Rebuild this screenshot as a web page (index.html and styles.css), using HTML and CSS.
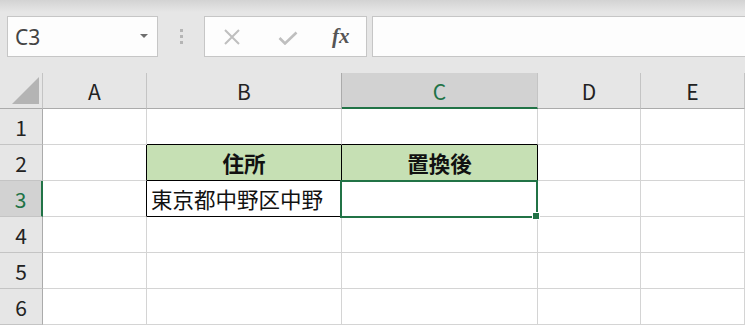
FILE: index.html
```html
<!DOCTYPE html>
<html>
<head>
  <title>Sheet</title>
  <link rel="stylesheet" href="styles.css">
</head>
<body>
  <div class="ribbon">
    <div class="namebox">
      <span class="ref">C3</span>
      <span class="caret"></span>
    </div>
    <div class="grip"><i></i><i></i><i></i></div>
    <div class="fxbox">
      <svg class="icon" width="18" height="16" viewBox="0 0 18 16">
        <path d="M2 1 L16 15 M16 1 L2 15" stroke="#bfbfbf" stroke-width="2" fill="none"/>
      </svg>
      <svg class="icon" width="20" height="14" viewBox="0 0 20 14">
        <path d="M1.5 7 L7 12.5 L18.5 1.5" stroke="#bfbfbf" stroke-width="2.6" fill="none"/>
      </svg>
      <span class="fx">fx</span>
    </div>
    <div class="formula"></div>
  </div>

  <div class="sheet">
    <div class="corner"><span class="tri"></span></div>
    <div class="colhead">A</div>
    <div class="colhead">B</div>
    <div class="colhead active">C</div>
    <div class="colhead">D</div>
    <div class="colhead">E</div>

    <div class="rowhead">1</div>
    <div class="cell"></div>
    <div class="cell edge-bottom"></div>
    <div class="cell edge-bottom"></div>
    <div class="cell"></div>
    <div class="cell"></div>

    <div class="rowhead">2</div>
    <div class="cell edge-right"></div>
    <div class="cell title">住所</div>
    <div class="cell title">置換後</div>
    <div class="cell"></div>
    <div class="cell"></div>

    <div class="rowhead active">3</div>
    <div class="cell edge-right"></div>
    <div class="cell boxed">東京都中野区中野</div>
    <div class="cell boxed selected"></div>
    <div class="cell"></div>
    <div class="cell"></div>

    <div class="rowhead">4</div>
    <div class="cell"></div>
    <div class="cell"></div>
    <div class="cell"></div>
    <div class="cell"></div>
    <div class="cell"></div>

    <div class="rowhead">5</div>
    <div class="cell"></div>
    <div class="cell"></div>
    <div class="cell"></div>
    <div class="cell"></div>
    <div class="cell"></div>

    <div class="rowhead">6</div>
    <div class="cell"></div>
    <div class="cell"></div>
    <div class="cell"></div>
    <div class="cell"></div>
    <div class="cell"></div>
  </div>
</body>
</html>
```

FILE: styles.css
```css
/* spreadsheet window */
body {
  margin: 0;
  background: #e6e6e6;
  font-family: "Noto Sans CJK JP", "Noto Sans", sans-serif;
  color: #222;
  overflow: hidden;
}

/* formula bar */
.ribbon {
  display: flex;
  align-items: flex-start;
  height: 73px;
  box-sizing: border-box;
  padding-top: 16px;
  background: linear-gradient(#d3d3d3, #e6e6e6 12px);
}

.namebox {
  display: flex;
  align-items: center;
  justify-content: space-between;
  width: 151px;
  height: 41px;
  margin-left: 7px;
  box-sizing: border-box;
  padding: 0 9px 0 7px;
  background: #fdfdfd;
  border: 1px solid #c6c6c6;
}

.namebox .ref {
  font-family: "Noto Sans", sans-serif;
  font-size: 21px;
  color: #444;
  line-height: 1;
  margin-top: 2px;
}

.namebox .caret {
  width: 0;
  height: 0;
  border-left: 4px solid transparent;
  border-right: 4px solid transparent;
  border-top: 4px solid #6e6e6e;
  margin-top: -2px;
}

.grip {
  width: 46px;
  height: 41px;
  display: flex;
  flex-direction: column;
  align-items: center;
  justify-content: center;
  gap: 3px;
}

.grip i {
  display: block;
  width: 3px;
  height: 3px;
  background: #b5b5b5;
}

.fxbox {
  display: flex;
  align-items: center;
  width: 163px;
  height: 41px;
  box-sizing: border-box;
  padding-left: 18px;
  background: #fdfdfd;
  border: 1px solid #c6c6c6;
}

.fxbox .icon {
  display: block;
}

.fxbox .icon + .icon {
  margin-left: 37px;
  margin-top: 2px;
}

.fx {
  margin-left: 34px;
  font-family: "Liberation Serif", serif;
  font-style: italic;
  font-weight: bold;
  font-size: 21px;
  color: #555;
  line-height: 1;
}

.formula {
  flex: 1;
  height: 41px;
  box-sizing: border-box;
  margin-left: 5px;
  margin-right: -2px;
  background: #fdfdfd;
  border: 1px solid #c6c6c6;
}

/* grid */
.sheet {
  display: grid;
  grid-template-columns: 43px 104px 195px 196px 103px 1fr;
  grid-auto-rows: 36px;
}

.sheet > div {
  box-sizing: border-box;
  display: flex;
  align-items: center;
}

.corner {
  position: relative;
  background: #e6e6e6;
  border-right: 1px solid #c4c4c4;
  border-bottom: 1px solid #ababab;
}

.corner .tri {
  position: absolute;
  left: 12px;
  top: 4px;
  width: 27px;
  height: 27px;
  background: #b4b4b4;
  clip-path: polygon(100% 0, 100% 100%, 0 100%);
}

.colhead {
  justify-content: center;
  background: #e6e6e6;
  border-right: 1px solid #c4c4c4;
  border-bottom: 1px solid #ababab;
  font-size: 21px;
  padding-top: 1px;
}

.colhead.active {
  background: #d2d2d2;
  color: #217346;
  border-bottom: 2px solid #217346;
}

.colhead:nth-child(3) {
  border-right-color: #ababab;
}

.rowhead {
  justify-content: center;
  background: #e6e6e6;
  border-right: 1px solid #ababab;
  border-bottom: 1px solid #c4c4c4;
  font-size: 21px;
  padding-top: 1px;
}

.rowhead.active {
  background: #d2d2d2;
  color: #217346;
  border-right: 2px solid #217346;
}

.cell {
  background: #fff;
  border-right: 1px solid #d4d4d4;
  border-bottom: 1px solid #d4d4d4;
  font-size: 21.5px;
  color: #111;
  padding-left: 4px;
  white-space: nowrap;
}

.cell.edge-bottom {
  border-bottom-color: #000;
}

.cell.edge-right {
  border-right-color: #000;
}

.cell.title {
  justify-content: center;
  padding-left: 0;
  background: #c6e0b4;
  font-weight: bold;
  border-right-color: #000;
  border-bottom-color: #000;
}

.cell.boxed {
  border-right-color: #000;
  border-bottom-color: #000;
}

.cell.selected {
  position: relative;
  border-right-color: #d4d4d4;
  border-bottom-color: #d4d4d4;
}

.cell.selected::before {
  content: "";
  position: absolute;
  left: -2px;
  top: -1px;
  width: 198px;
  height: 38px;
  box-sizing: border-box;
  border: 2px solid #217346;
}

.cell.selected::after {
  content: "";
  position: absolute;
  left: 191px;
  top: 32px;
  width: 6px;
  height: 6px;
  background: #217346;
  outline: 1px solid #fff;
}
```
